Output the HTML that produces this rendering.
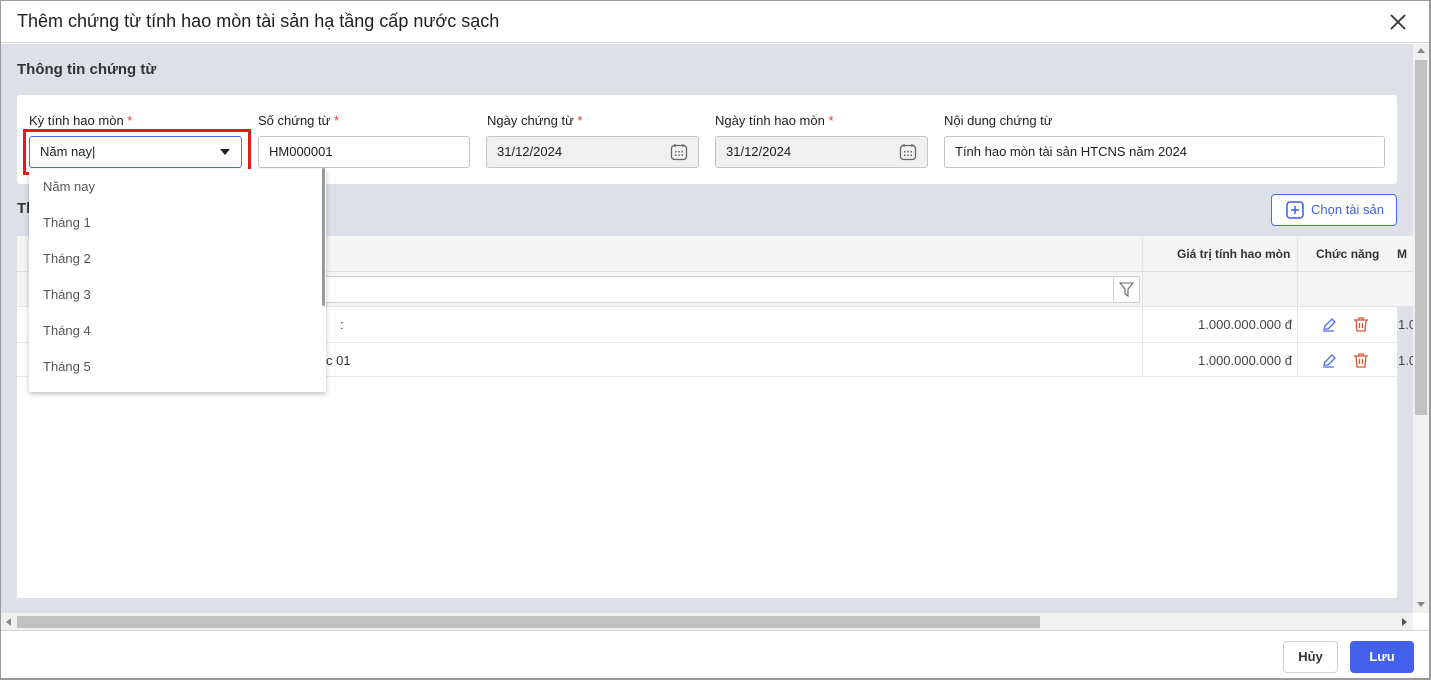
<!DOCTYPE html>
<html><head><meta charset="utf-8"><style>
*{box-sizing:border-box;margin:0;padding:0}
body{width:1431px;height:680px;overflow:hidden;font-family:"Liberation Sans",sans-serif;background:#fff;position:relative;font-size:13px;color:#212121}
.a{position:absolute}
.frame{left:0;top:0;width:1431px;height:680px;border:1px solid #9a9a9a;border-width:1px 2px 2px 1px}
.lbl{font-size:13px;color:#212121}
.req{color:#e53935}
.inp{height:32px;border:1px solid #c4c4c4;border-radius:3px;background:#fff;padding:0 10px;line-height:30px;font-size:13px}
.dis{background:#f0f0f0}
.dd div{height:36px;line-height:36px;padding-left:14px;color:#555;font-size:13px}
</style></head><body>
<div class="a" style="left:0;top:0;width:1431px;height:43px;background:#fff;border-bottom:1px solid #d6d6d6"></div>
<div class="a" style="left:17px;top:11px;font-size:18px;color:#212121">Thêm chứng từ tính hao mòn tài sản hạ tầng cấp nước sạch</div>
<svg class="a" style="left:1389px;top:13px" width="18" height="18"><path d="M2 2L16 16M16 2L2 16" stroke="#333" stroke-width="1.8"/></svg>
<div class="a" style="left:1px;top:44px;width:1412px;height:569px;background:#dde0e7"></div>
<div class="a" style="left:17px;top:61px;font-size:15px;font-weight:bold;color:#333">Thông tin chứng từ</div>
<div class="a" style="left:17px;top:95px;width:1380px;height:89px;background:#fff;border-radius:3px"></div>
<div class="a lbl" style="left:29px;top:113px">Kỳ tính hao mòn <span class="req">*</span></div>
<div class="a lbl" style="left:258px;top:113px">Số chứng từ <span class="req">*</span></div>
<div class="a lbl" style="left:487px;top:113px">Ngày chứng từ <span class="req">*</span></div>
<div class="a lbl" style="left:715px;top:113px">Ngày tính hao mòn <span class="req">*</span></div>
<div class="a lbl" style="left:944px;top:113px">Nội dung chứng từ</div>
<div class="a" style="left:23px;top:129px;width:228px;height:46px;border:3px solid #e21c1c"></div>
<div class="a inp" style="left:29px;top:136px;width:213px;border-color:#4a72d8">Năm nay|</div>
<svg class="a" style="left:220px;top:149px" width="10" height="6"><path d="M0 0H10L5 6Z" fill="#222"/></svg>
<div class="a inp" style="left:258px;top:136px;width:212px">HM000001</div>
<div class="a inp dis" style="left:486px;top:136px;width:213px">31/12/2024</div>
<div class="a inp dis" style="left:715px;top:136px;width:213px">31/12/2024</div>
<svg class="a" style="left:670px;top:143px" width="18" height="18"><rect x="1.5" y="2.5" width="15" height="14" rx="3" fill="none" stroke="#666" stroke-width="1.3"/><path d="M5 1v3M13 1v3" stroke="#666" stroke-width="1.3"/><g fill="#666"><rect x="5" y="8" width="1.5" height="1.5"/><rect x="8.3" y="8" width="1.5" height="1.5"/><rect x="11.5" y="8" width="1.5" height="1.5"/><rect x="5" y="11.5" width="1.5" height="1.5"/><rect x="8.3" y="11.5" width="1.5" height="1.5"/><rect x="11.5" y="11.5" width="1.5" height="1.5"/></g></svg>
<svg class="a" style="left:899px;top:143px" width="18" height="18"><rect x="1.5" y="2.5" width="15" height="14" rx="3" fill="none" stroke="#666" stroke-width="1.3"/><path d="M5 1v3M13 1v3" stroke="#666" stroke-width="1.3"/><g fill="#666"><rect x="5" y="8" width="1.5" height="1.5"/><rect x="8.3" y="8" width="1.5" height="1.5"/><rect x="11.5" y="8" width="1.5" height="1.5"/><rect x="5" y="11.5" width="1.5" height="1.5"/><rect x="8.3" y="11.5" width="1.5" height="1.5"/><rect x="11.5" y="11.5" width="1.5" height="1.5"/></g></svg>
<div class="a inp" style="left:944px;top:136px;width:441px">Tính hao mòn tài sản HTCNS năm 2024</div>
<div class="a" style="left:17px;top:200px;font-size:15px;font-weight:bold;color:#333">Th</div>
<div class="a" style="left:1271px;top:194px;width:126px;height:32px;border:1px solid #4a6cf0;border-radius:4px;background:#fff;color:#3d5ee8;font-size:13px;line-height:30px;padding-left:39px;white-space:nowrap">Chọn tài sản</div>
<svg class="a" style="left:1286px;top:201px" width="18" height="18"><rect x="1" y="1" width="16" height="16" rx="3" fill="none" stroke="#3d5ee8" stroke-width="1.5"/><path d="M9 5v8M5 9h8" stroke="#3d5ee8" stroke-width="1.5"/></svg>
<div class="a" style="left:17px;top:236px;width:1396px;height:362px;background:#fff"></div>
<div class="a" style="left:17px;top:236px;width:1396px;height:71px;background:#f4f4f4;border-bottom:1px solid #e4e4e4"></div>
<div class="a" style="left:17px;top:271px;width:1396px;height:1px;background:#e0e0e0"></div>
<div class="a" style="left:1142px;top:236px;width:1px;height:141px;background:#e4e4e4"></div>
<div class="a" style="left:1297px;top:236px;width:1px;height:141px;background:#e4e4e4"></div>
<div class="a" style="left:1397px;top:307px;width:16px;height:291px;background:#dde0e7"></div>
<div class="a" style="left:1177px;top:247px;font-weight:bold;color:#333;font-size:12px">Giá trị tính hao mòn</div>
<div class="a" style="left:1316px;top:247px;font-weight:bold;color:#333;font-size:12px">Chức năng</div>
<div class="a" style="left:1397px;top:247px;font-weight:bold;color:#333;font-size:12px">M</div>
<div class="a" style="left:300px;top:276px;width:840px;height:27px;border:1px solid #d0d0d0;background:#fff;border-radius:2px"></div>
<div class="a" style="left:1113px;top:276px;width:1px;height:27px;background:#d0d0d0"></div>
<svg class="a" style="left:1119px;top:282px" width="15" height="15"><path d="M1 1H14L9 7V14L6 12V7Z" fill="none" stroke="#666" stroke-width="1.1"/></svg>
<div class="a" style="left:17px;top:342px;width:1380px;height:1px;background:#e8e8e8"></div>
<div class="a" style="left:17px;top:376px;width:1380px;height:1px;background:#e8e8e8"></div>
<div class="a" style="left:340px;top:317px;color:#333">:</div>
<div class="a" style="left:326px;top:353px;color:#333">c 01</div>
<div class="a" style="left:1198px;top:317px;color:#444">1.000.000.000 đ</div>
<div class="a" style="left:1198px;top:353px;color:#444">1.000.000.000 đ</div>
<div class="a" style="left:1398px;top:317px;color:#444">1.0</div>
<div class="a" style="left:1398px;top:353px;color:#444">1.0</div>
<svg class="a" style="left:1321px;top:317px" width="16" height="16"><path d="M2 14H13M3 12L4 9L11 2L14 5L7 12Z" fill="none" stroke="#4a6cf0" stroke-width="1.3"/></svg>
<svg class="a" style="left:1321px;top:353px" width="16" height="16"><path d="M2 14H13M3 12L4 9L11 2L14 5L7 12Z" fill="none" stroke="#4a6cf0" stroke-width="1.3"/></svg>
<svg class="a" style="left:1353px;top:316px" width="16" height="17"><path d="M1 4H15M6 4V2H10V4M3 4L4 15H12L13 4M6.5 7V12M9.5 7V12" fill="none" stroke="#e0502c" stroke-width="1.3"/></svg>
<svg class="a" style="left:1353px;top:352px" width="16" height="17"><path d="M1 4H15M6 4V2H10V4M3 4L4 15H12L13 4M6.5 7V12M9.5 7V12" fill="none" stroke="#e0502c" stroke-width="1.3"/></svg>
<div class="a dd" style="left:29px;top:169px;width:297px;height:223px;background:#fff;box-shadow:0 2px 5px rgba(0,0,0,.25)">
<div>Năm nay</div><div>Tháng 1</div><div>Tháng 2</div><div>Tháng 3</div><div>Tháng 4</div><div>Tháng 5</div></div>
<div class="a" style="left:322px;top:168px;width:3px;height:138px;background:#999;border-radius:2px"></div>
<div class="a" style="left:1413px;top:44px;width:16px;height:569px;background:#f0f0f0"></div>
<div class="a" style="left:1415px;top:60px;width:12px;height:355px;background:#c1c1c1"></div>
<svg class="a" style="left:1417px;top:48px" width="8" height="5"><path d="M0 5L4 0L8 5Z" fill="#888"/></svg>
<svg class="a" style="left:1417px;top:602px" width="8" height="5"><path d="M0 0L4 5L8 0Z" fill="#888"/></svg>
<div class="a" style="left:1px;top:613px;width:1412px;height:17px;background:#f0f0f0"></div>
<div class="a" style="left:17px;top:616px;width:1023px;height:12px;background:#c1c1c1"></div>
<svg class="a" style="left:6px;top:618px" width="5" height="8"><path d="M5 0L0 4L5 8Z" fill="#888"/></svg>
<svg class="a" style="left:1402px;top:618px" width="5" height="8"><path d="M0 0L5 4L0 8Z" fill="#555"/></svg>
<div class="a" style="left:0;top:630px;width:1431px;height:1px;background:#d6d6d6"></div>
<div class="a" style="left:1283px;top:641px;width:55px;height:32px;border:1px solid #d0d0d0;border-radius:4px;background:#fff;text-align:center;line-height:30px;font-size:13px;font-weight:bold;color:#333">Hủy</div>
<div class="a" style="left:1350px;top:641px;width:64px;height:32px;border-radius:4px;background:#4461ee;text-align:center;line-height:32px;font-size:13px;font-weight:bold;color:#fff">Lưu</div>
<div class="a frame"></div>
</body></html>
